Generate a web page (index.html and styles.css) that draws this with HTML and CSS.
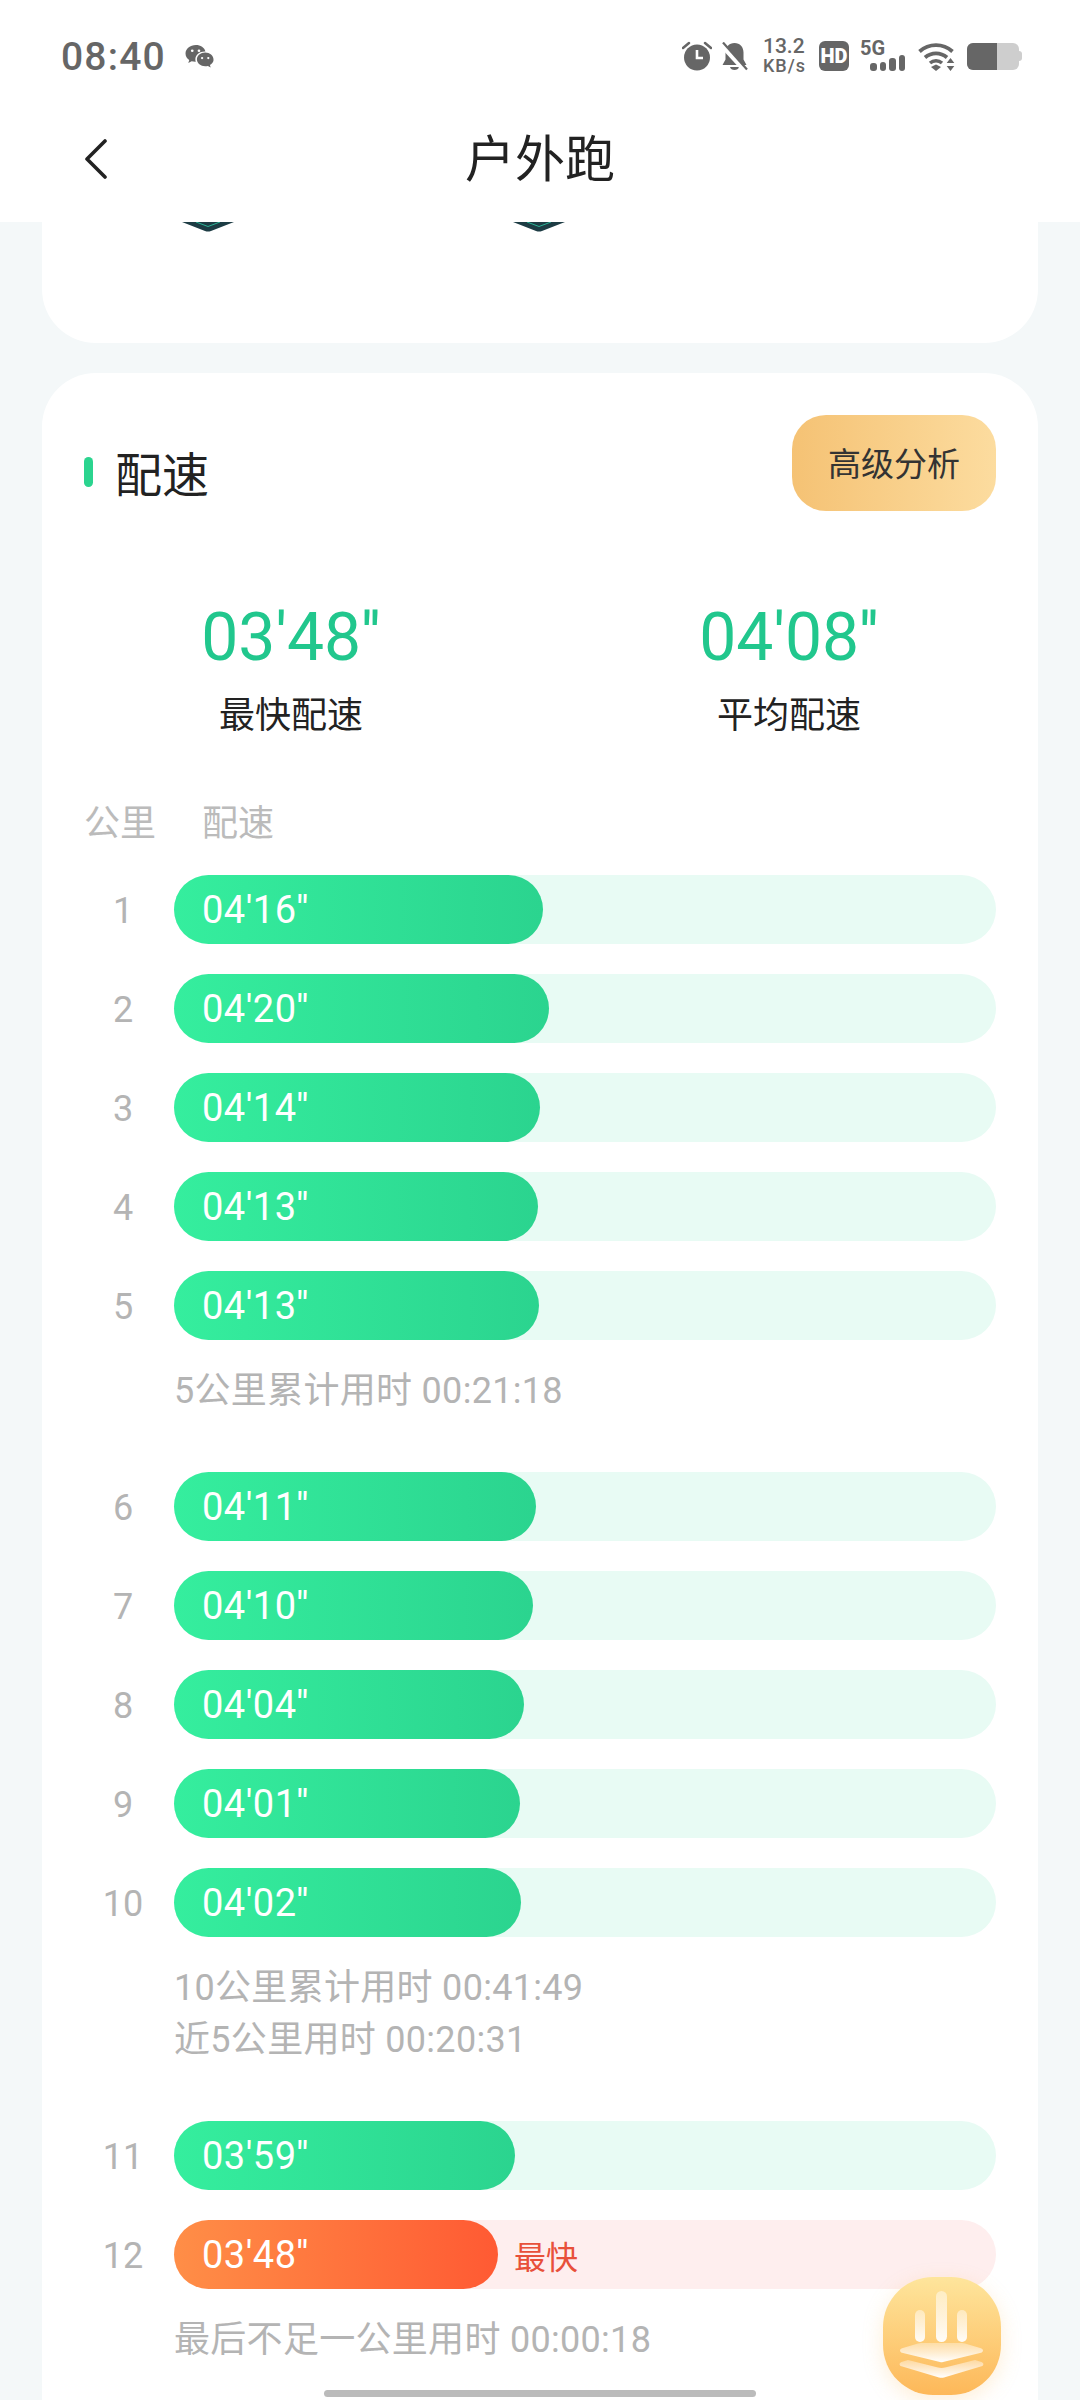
FILE: index.html
```html
<!DOCTYPE html>
<html lang="zh-CN">
<head>
  <meta charset="UTF-8" />
  <meta name="viewport" content="width=device-width, initial-scale=1.0"/>
  <title>户外跑</title>
  <link rel="stylesheet" href="styles.css">
</head>
<body>
  <div class="page">
    <header class="topbar">
      <div class="status">
        <div class="status-left">
          <span class="clock">08:40</span>
          <svg class="ic-wechat" viewBox="0 0 28 24"><path d="M10.500 0C4.900 0 .5 3.600.5 8.200c0 2.600 1.400 4.700 3.600 6.200l-.9 2.800 3.200-1.700c1.100.3 2.200.5 3.400.5h.6c-.3-.9-.4-1.600-.4-2.400 0-4.200 4-7.500 9-7.500h.7C18.800 2.400 15 0 10.500 0z" fill="#666"/><path d="M27.500 13.800c0-3.700-3.600-6.700-8-6.700s-8 3-8 6.700 3.600 6.700 8 6.700c.9 0 1.800-.1 2.600-.4l2.700 1.500-.7-2.400c2-1.300 3.400-3.100 3.400-4.400z" fill="#666"/><circle cx="7" cy="5.500" r="1.300" fill="#fff"/><circle cx="13.500" cy="5.500" r="1.300" fill="#fff"/><circle cx="16.500" cy="12.500" r="1.100" fill="#fff"/><circle cx="22.500" cy="12.500" r="1.100" fill="#fff"/></svg>
        </div>
        <div class="status-right">
          <svg class="ic-alarm" viewBox="0 0 30 30"><circle cx="15" cy="16.500" r="13" fill="#666"/><path d="M15 9v8h6" fill="none" stroke="#fff" stroke-width="2.600"/><path d="M1 7l6-5M29 7l-6-5" stroke="#666" stroke-width="2.500" stroke-linecap="round"/></svg>
          <svg class="ic-bell" viewBox="0 0 27 29"><path d="M13.500 1c-5.500 0-9 4-9 9.500v7L1.500 23h24l-3-5.500v-7C22.500 5 19 1 13.500 1z" fill="#666"/><path d="M9 25c.7 4 8.300 4 9 0z" fill="#666"/><path d="M1 3.500l24 26" stroke="#fff" stroke-width="5"/><path d="M2 .5l24 27" stroke="#666" stroke-width="2.200"/></svg>
          <div class="speed"><span>13.2</span><span>KB/s</span></div>
          <div class="hd">HD</div>
          <div class="signal">
            <span class="five-g">5G</span>
            <div class="bars"><i class="b1"></i><i class="b2"></i><i class="b3"></i><i class="b4"></i></div>
          </div>
          <svg class="ic-wifi" viewBox="0 0 37 29"><path d="M1.500 9.500C11 1 25 1 34.500 9.500" fill="none" stroke="#666" stroke-width="3.800"/><path d="M7 15.500C13.500 10 22.500 10 29 15.500" fill="none" stroke="#666" stroke-width="3.800"/><path d="M12 21C15.500 18 20.500 18 24 21" fill="none" stroke="#666" stroke-width="3.600"/><path d="M13 25l5-2.500 5 2.500-5 4z" fill="#666"/><path d="M32.500 16l3.800 5h-7.600zM32.500 29l-3.800-5h7.600z" fill="#666"/></svg>
          <div class="battery"><div class="battery-level"></div><div class="battery-cap"></div></div>
        </div>
      </div>
      <div class="navbar">
        <svg class="ic-back" viewBox="0 0 24 40"><path d="M21 2L3 20l18 18" fill="none" stroke="#222" stroke-width="3.600" stroke-linecap="round" stroke-linejoin="round"/></svg>
        <h1 class="nav-title">户外跑</h1>
      </div>
    </header>

    <section class="card-stub">
      <svg class="shield-tip" viewBox="0 0 52 10"><path d="M0 0h52L29 9c-2 .8-4 .8-6 0z" fill="#1d3c44"/><path d="M14 0l12 4.500L38 0" fill="none" stroke="#2bb596" stroke-width="1"/></svg>
      <svg class="shield-tip" viewBox="0 0 52 10"><path d="M0 0h52L29 9c-2 .8-4 .8-6 0z" fill="#1d3c44"/><path d="M14 0l12 4.500L38 0" fill="none" stroke="#2bb596" stroke-width="1"/></svg>
    </section>

    <section class="card">
      <div class="card-head">
        <div class="card-title"><span class="marker"></span>配速</div>
        <div class="btn-adv">高级分析</div>
      </div>

      <div class="stats">
        <div class="stat"><div class="stat-num">03'48''</div><div class="stat-label">最快配速</div></div>
        <div class="stat"><div class="stat-num">04'08''</div><div class="stat-label">平均配速</div></div>
      </div>

      <div class="table-head"><span class="th-km">公里</span><span>配速</span></div>

      <div class="group">
        <div class="row"><span class="km">1</span><div class="track"><div class="fill" style="width:369px">04'16''</div></div></div>
        <div class="row"><span class="km">2</span><div class="track"><div class="fill" style="width:375px">04'20''</div></div></div>
        <div class="row"><span class="km">3</span><div class="track"><div class="fill" style="width:366px">04'14''</div></div></div>
        <div class="row"><span class="km">4</span><div class="track"><div class="fill" style="width:364px">04'13''</div></div></div>
        <div class="row"><span class="km">5</span><div class="track"><div class="fill" style="width:365px">04'13''</div></div></div>
        <div class="note">5公里累计用时 00:21:18</div>
      </div>

      <div class="group">
        <div class="row"><span class="km">6</span><div class="track"><div class="fill" style="width:362px">04'11''</div></div></div>
        <div class="row"><span class="km">7</span><div class="track"><div class="fill" style="width:359px">04'10''</div></div></div>
        <div class="row"><span class="km">8</span><div class="track"><div class="fill" style="width:350px">04'04''</div></div></div>
        <div class="row"><span class="km">9</span><div class="track"><div class="fill" style="width:346px">04'01''</div></div></div>
        <div class="row"><span class="km">10</span><div class="track"><div class="fill" style="width:347px">04'02''</div></div></div>
        <div class="note">10公里累计用时 00:41:49<br>近5公里用时 00:20:31</div>
      </div>

      <div class="group">
        <div class="row"><span class="km">11</span><div class="track"><div class="fill" style="width:341px">03'59''</div></div></div>
        <div class="row"><span class="km">12</span><div class="track track-fast"><div class="fill fill-fast" style="width:324px">03'48''</div><span class="fast-tag">最快</span></div></div>
        <div class="note">最后不足一公里用时 00:00:18</div>
      </div>
    </section>

    <div class="float-btn">
      <svg viewBox="0 0 118 118">
        <defs>
          <linearGradient id="glyph" x1="0" y1="0" x2="0" y2="1">
            <stop offset="0" stop-color="#fff" stop-opacity=".35"/>
            <stop offset="1" stop-color="#fff"/>
          </linearGradient>
          <linearGradient id="bar" x1="0" y1="0" x2="0" y2="1">
            <stop offset="0" stop-color="#fff" stop-opacity=".45"/>
            <stop offset="1" stop-color="#fff" stop-opacity=".95"/>
          </linearGradient>
        </defs>
        <rect x="32" y="33" width="10" height="32" rx="5" fill="url(#bar)"/>
        <rect x="53" y="14" width="11" height="51" rx="5.500" fill="url(#bar)"/>
        <rect x="74" y="33" width="10" height="32" rx="5" fill="url(#bar)"/>
        <path d="M17 73.500c0-1 .8-1.900 2-2.300L35 66.500c1-.3 2-.5 3-.5h41c1 0 2 .2 3 .5l16 4.700c1.200.4 2 1.300 2 2.300s-.8 1.900-2 2.300L60 85c-1 .3-2 .3-3 0L19 75.800c-1.200-.4-2-1.300-2-2.300z" fill="url(#glyph)"/>
        <path d="M25 83l30 7.500c2 .5 5 .5 7 0L92 83l6.500 2c2.500 .8 2.500 3.500 0 4.300L61 100.500c-1.500.4-3.500.4-5 0L18.500 89.300c-2.500-.8-2.500-3.500 0-4.300z" fill="url(#glyph)"/>
      </svg>
    </div>
    <div class="home-bar"></div>
  </div>
</body>
</html>
```

FILE: styles.css
```css
* {
  box-sizing: border-box;
}
body {
  margin: 0;
  background: #f4f8f9;
  font-family: Roboto, "Noto Sans CJK SC", sans-serif;
}
.page {
  position: relative;
  width: 1080px;
  height: 2400px;
  overflow: hidden;
  background: #f4f8f9;
}

/* status bar + title */
.topbar {
  height: 222px;
  background: #fff;
}
.status {
  height: 113px;
  padding: 38px 61px 0 61px;
  display: flex;
  justify-content: space-between;
  align-items: flex-start;
}
.status-left {
  display: flex;
  align-items: center;
  height: 38px;
}
.clock {
  font-size: 39px;
  font-weight: 500;
  letter-spacing: 1.200px;
  color: #666;
}
.ic-wechat {
  width: 29px;
  height: 25px;
  margin-left: 19px;
}
.status-right {
  display: flex;
  align-items: center;
  height: 34px;
  margin-top: 1px;
}
.ic-alarm {
  width: 30px;
  height: 30px;
}
.ic-bell {
  width: 27px;
  height: 29px;
  margin-left: 9px;
}
.speed {
  display: flex;
  flex-direction: column;
  align-items: flex-start;
  margin-left: 15px;
  color: #666;
  font-size: 21px;
  font-weight: 500;
  line-height: 20px;
}
.speed span:last-child {
  font-size: 18px;
  letter-spacing: 1px;
}
.hd {
  width: 30px;
  height: 30px;
  margin-left: 13px;
  border-radius: 6px;
  background: #666;
  color: #fff;
  font-size: 20px;
  font-weight: 900;
  line-height: 30px;
  text-align: center;
}
.signal {
  width: 45px;
  height: 30px;
  margin-left: 11px;
  position: relative;
}
.five-g {
  display: block;
  font-size: 20px;
  font-weight: 700;
  line-height: 15px;
  color: #666;
}
.bars {
  position: absolute;
  right: 0;
  bottom: 0;
  display: flex;
  align-items: flex-end;
  gap: 3px;
}
.bars i {
  display: block;
  width: 6.500px;
  border-radius: 3px;
  background: #666;
}
.bars .b1 { height: 8px; }
.bars .b2 { height: 9px; }
.bars .b3 { height: 13px; }
.bars .b4 { height: 16px; }
.ic-wifi {
  width: 37px;
  height: 29px;
  margin-left: 13px;
}
.battery {
  width: 52px;
  height: 27px;
  margin-left: 12px;
  display: flex;
  align-items: center;
  position: relative;
  background: #cecece;
  border-radius: 6px;
}
.battery-level {
  width: 30px;
  height: 27px;
  background: #666;
  border-radius: 6px 0 0 6px;
}
.battery-cap {
  position: absolute;
  right: -3px;
  width: 4px;
  height: 10px;
  background: #cecece;
  border-radius: 0 3px 3px 0;
}
.navbar {
  position: relative;
  height: 84px;
  display: flex;
  align-items: center;
  justify-content: center;
}
.ic-back {
  position: absolute;
  left: 84px;
  top: 26px;
  width: 24px;
  height: 40px;
}
.nav-title {
  margin: 0;
  font-size: 50px;
  font-weight: 400;
  color: #222;
}

/* cards */
.card-stub {
  height: 121px;
  margin: 0 42px;
  padding-left: 140px;
  display: flex;
  gap: 279px;
  align-items: flex-start;
  background: #fff;
  border-radius: 0 0 54px 54px;
}
.shield-tip {
  width: 52px;
  height: 10px;
}
.card {
  margin: 30px 42px 0;
  padding: 42px 42px 60px;
  background: #fff;
  border-radius: 54px 54px 0 0;
  height: 2100px;
}
.card-head {
  display: flex;
  justify-content: space-between;
  align-items: flex-start;
}
.card-title {
  display: flex;
  align-items: center;
  height: 95px;
  padding-top: 18px;
  font-size: 47px;
  color: #222;
}
.marker {
  width: 9px;
  height: 30px;
  margin-right: 22px;
  border-radius: 5px;
  background: #2bd48f;
}
.btn-adv {
  width: 204px;
  height: 96px;
  border-radius: 34px;
  background: linear-gradient(90deg, #f5c274, #fcdc9f);
  color: #333;
  font-size: 33px;
  line-height: 100px;
  text-align: center;
}
.stats {
  display: grid;
  grid-template-columns: 1fr 1fr;
  margin: 87px -42px 0;
  text-align: center;
}
.stat-num {
  font-size: 66px;
  line-height: 80px;
  color: #21c78d;
}
.stat-label {
  margin-top: 13px;
  font-size: 36px;
  line-height: 50px;
  color: #222;
}
.table-head {
  display: flex;
  margin-top: 58px;
  font-size: 36px;
  line-height: 50px;
  color: #bbb;
}
.th-km {
  width: 118px;
}

/* pace rows */
.group {
  margin-top: 26px;
}
.group + .group {
  margin-top: 55px;
}
.row {
  display: flex;
  align-items: center;
  margin-bottom: 30px;
}
.km {
  width: 78px;
  margin-right: 12px;
  padding-top: 2px;
  font-size: 36px;
  color: #b4b4b4;
  text-align: center;
}
.track {
  flex: 1;
  height: 69px;
  display: flex;
  align-items: center;
  border-radius: 35px;
  background: #e8fbf4;
}
.fill {
  height: 69px;
  padding-left: 28px;
  border-radius: 35px;
  background: linear-gradient(90deg, #35ee9e, #2bd48f);
  color: #fff;
  font-size: 38px;
  line-height: 71px;
  letter-spacing: 0.500px;
}
.track-fast {
  background: #feeeee;
}
.fill-fast {
  background: linear-gradient(90deg, #ff8e47, #ff5a33);
}
.fast-tag {
  margin-left: 16px;
  font-size: 32px;
  color: #e8503a;
}
.note {
  margin: -5px 0 0 90px;
  font-size: 36px;
  line-height: 52px;
  letter-spacing: 0.300px;
  color: #b4b4b4;
}

/* overlays */
.float-btn {
  position: absolute;
  left: 883px;
  top: 2277px;
  width: 118px;
  height: 118px;
  border-radius: 50px;
  background: linear-gradient(180deg, #fee59c, #fdb859);
  box-shadow: 0 6px 20px rgba(253, 190, 100, 0.25);
}
.float-btn svg {
  display: block;
  width: 118px;
  height: 118px;
}
.home-bar {
  position: absolute;
  left: 324px;
  top: 2390px;
  width: 432px;
  height: 7px;
  border-radius: 4px;
  background: #bbb;
}
```
